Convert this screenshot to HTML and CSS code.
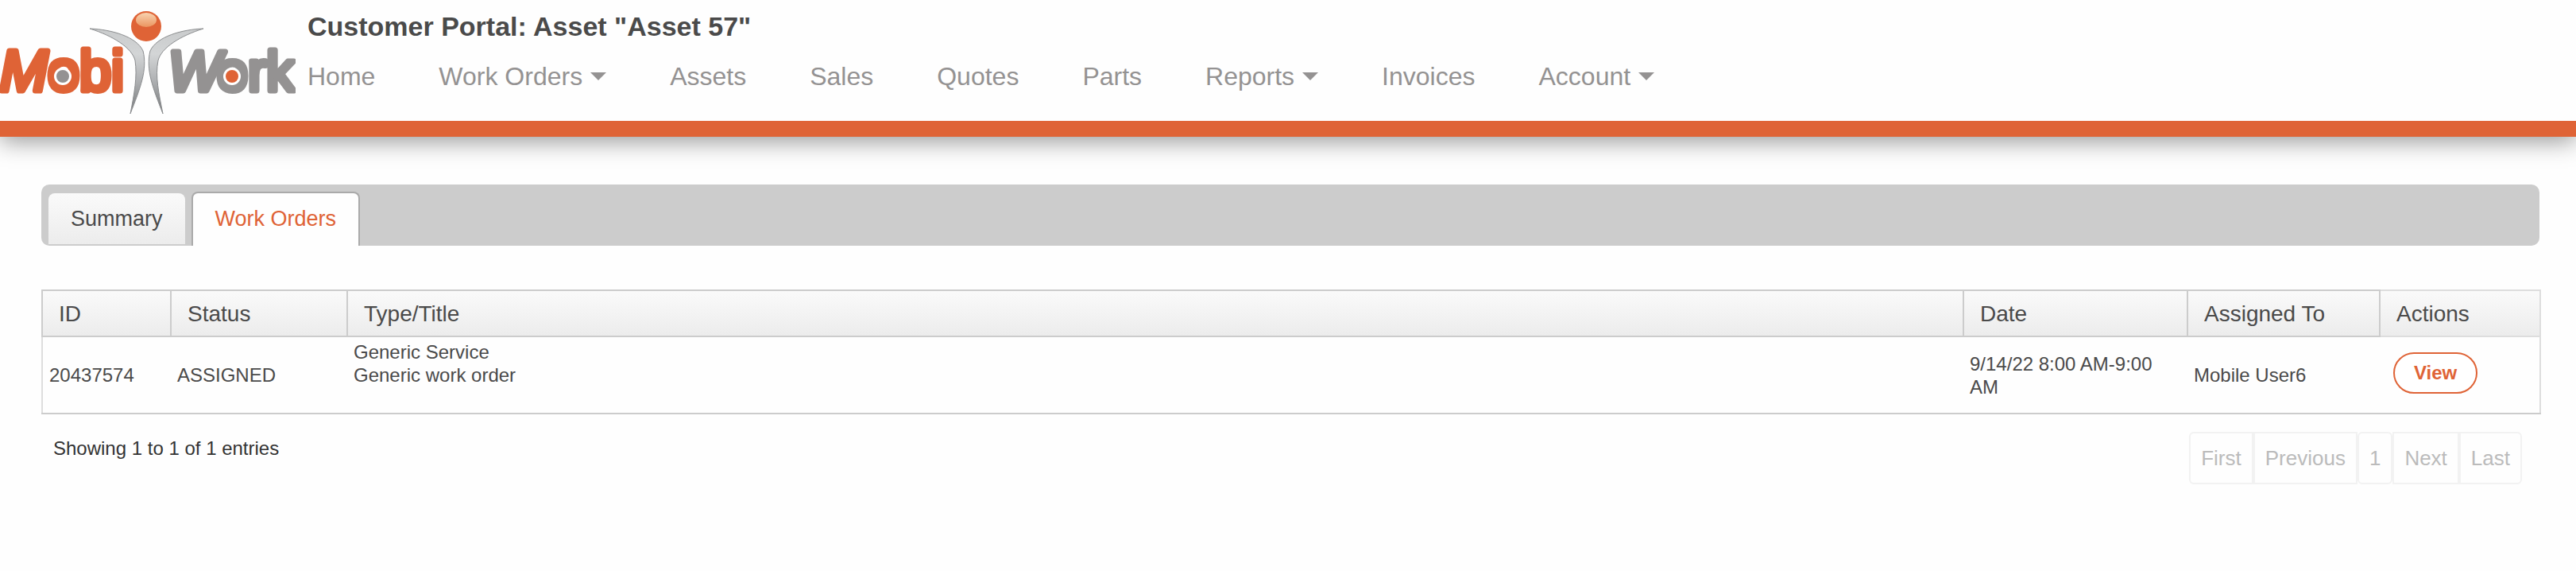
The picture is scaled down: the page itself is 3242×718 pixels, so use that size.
FILE: index.html
```html
<!DOCTYPE html>
<html lang="en">
<head>
    <meta charset="UTF-8">
    <meta name="viewport" content="width=device-width, initial-scale=1.0">
    <title>Customer Portal</title>
    <link rel="stylesheet" href="styles.css">
</head>
<body>
    <header class="header">
        <a href="#" class="logo" aria-label="MobiWork">
            <svg width="372" height="152" viewBox="0 0 372 152">
                <defs>
                    <linearGradient id="silver" x1="0" y1="0" x2="0" y2="1">
                        <stop offset="0" stop-color="#c9cbcc"/>
                        <stop offset="0.3" stop-color="#d3d5d6"/>
                        <stop offset="0.6" stop-color="#b0b2b4"/>
                        <stop offset="1" stop-color="#77797b"/>
                    </linearGradient>
                    <linearGradient id="shine" x1="0" y1="0" x2="0" y2="1">
                        <stop offset="0" stop-color="#f8d3b0"/>
                        <stop offset="1" stop-color="#eb9560"/>
                    </linearGradient>
                </defs>
                <text x="0" y="114" class="logo-mobi"><tspan class="slanted">M</tspan>obi</text>
                <text x="212" y="114" class="logo-work"><tspan class="slanted">W</tspan><tspan dx="-5">ork</tspan></text>
                <circle cx="79" cy="96" r="11" fill="#fff"/>
                <circle cx="79" cy="96" r="8" fill="#949292"/>
                <circle cx="292" cy="96" r="11" fill="#fff"/>
                <circle cx="292" cy="96" r="8" fill="#df6336"/>
                <path d="M113 36C140 37 172 46 180 64C186 88 176 112 164 143C169 118 173 96 170 76C166 60 142 45 113 36Z" fill="url(#silver)" stroke="#8b8d8f"/>
                <path d="M256 36C229 37 197 46 189 64C183 88 193 112 205 143C200 118 195 96 199 76C203 60 227 45 256 36Z" fill="url(#silver)" stroke="#8b8d8f"/>
                <circle cx="184" cy="33" r="19" fill="#df6336"/>
                <ellipse cx="184" cy="25" rx="13" ry="9" fill="url(#shine)"/>
            </svg>
        </a>
        <div class="header-content">
            <h1>Customer Portal: Asset "Asset 57"</h1>
            <nav class="menu">
                <a href="#">Home</a>
                <a href="#" class="dropdown">Work Orders</a>
                <a href="#">Assets</a>
                <a href="#">Sales</a>
                <a href="#">Quotes</a>
                <a href="#">Parts</a>
                <a href="#" class="dropdown">Reports</a>
                <a href="#">Invoices</a>
                <a href="#" class="dropdown">Account</a>
            </nav>
        </div>
    </header>

    <main class="container">
        <div class="tabs">
            <a href="#" class="tab">Summary</a>
            <a href="#" class="tab active">Work Orders</a>
        </div>

        <table class="work-orders">
            <colgroup>
                <col class="col-id">
                <col class="col-status">
                <col>
                <col class="col-date">
                <col class="col-assigned">
                <col class="col-actions">
            </colgroup>
            <thead>
                <tr>
                    <th>ID</th>
                    <th>Status</th>
                    <th>Type/Title</th>
                    <th>Date</th>
                    <th>Assigned To</th>
                    <th class="no-sort">Actions</th>
                </tr>
            </thead>
            <tbody>
                <tr>
                    <td>20437574</td>
                    <td>ASSIGNED</td>
                    <td>Generic Service<br>Generic work order<br>&nbsp;</td>
                    <td>9/14/22 8:00 AM-9:00 AM</td>
                    <td>Mobile User6</td>
                    <td class="actions"><button type="button" class="btn-view">View</button></td>
                </tr>
            </tbody>
        </table>

        <div class="table-footer">
            <p>Showing 1 to 1 of 1 entries</p>
            <div class="pagination">
                <button type="button" disabled>First</button>
                <button type="button" disabled>Previous</button>
                <button type="button" disabled class="page">1</button>
                <button type="button" disabled>Next</button>
                <button type="button" disabled>Last</button>
            </div>
        </div>
    </main>
</body>
</html>
```
FILE: styles.css
```css
* {
    box-sizing: border-box;
}

body {
    font-family: "Helvetica Neue", Helvetica, "Liberation Sans", Arial, sans-serif;
    font-size: 24px;
    line-height: 29px;
    color: #4a4a4a;
    background-color: #fefefe;
    margin: 0;
}

a {
    text-decoration: none;
}

/* header */
.header {
    display: flex;
    gap: 15px;
    border-bottom: 20px solid #df6336;
    box-shadow: 0 6px 28px rgba(0, 0, 0, 0.4);
}

.logo svg {
    display: block;
}

.logo text {
    stroke-width: 7px;
    stroke-linejoin: round;
}

.logo .slanted {
    font-style: italic;
}

.logo-mobi {
    font-size: 72px;
    fill: #df6336;
    stroke: #df6336;
}

.logo-work {
    font-size: 70px;
    fill: #949292;
    stroke: #949292;
}

h1 {
    margin: 12px 0 22px;
    font-size: 34px;
    line-height: 42px;
}

.menu {
    display: flex;
    gap: 80px;
}

.menu a {
    display: flex;
    align-items: center;
    gap: 10px;
    font-size: 32px;
    line-height: 40px;
    color: #949292;
}

.dropdown::after {
    content: "";
    border: 10px solid transparent;
    border-top-color: #949292;
    border-bottom: 0;
}

/* tabs */
.container {
    padding: 60px 44px 0 52px;
}

.tabs {
    display: flex;
    align-items: flex-end;
    gap: 8px;
    height: 77px;
    padding: 0 9px;
    margin-right: 2px;
    background-color: #ccc;
    border-radius: 10px;
}

.tab {
    height: 64px;
    margin-bottom: 2px;
    padding: 0 28px;
    font-size: 27px;
    line-height: 64px;
    color: #4a4a4a;
    background: linear-gradient(#fafafa, #ececec);
    border-radius: 8px 8px 0 0;
}

.tab.active {
    height: 68px;
    margin-bottom: 0;
    color: #df6336;
    background: #fefefe;
    border: 2px solid #aaa;
    border-bottom: 0;
}

/* table */
.work-orders {
    width: 100%;
    margin-top: 55px;
    border-collapse: collapse;
    table-layout: fixed;
    border: 2px solid #ddd;
    border-bottom-color: #ccc;
}

.col-id {
    width: 162px;
}

.col-status {
    width: 222px;
}

.col-date {
    width: 282px;
}

.col-assigned {
    width: 242px;
}

.col-actions {
    width: 202px;
}

th {
    height: 58px;
    padding: 0 20px;
    font-size: 28px;
    font-weight: 500;
    text-align: left;
    background: linear-gradient(#fafafa, #ececec);
    border: 2px solid #ccc;
}

th.no-sort {
    border-color: #ddd;
}

td {
    padding: 4px 8px;
}

.actions {
    padding: 0 17px 6px;
}

.btn-view {
    display: block;
    height: 52px;
    padding: 0 24px;
    font-family: inherit;
    font-size: 24px;
    font-weight: bold;
    color: #df6336;
    background: #fff;
    border: 2px solid #df6336;
    border-radius: 26px;
    cursor: pointer;
}

.table-footer {
    display: flex;
    justify-content: space-between;
    padding: 22px 24px 0 15px;
}

.table-footer p {
    margin: 6px 0 0;
    color: #333;
}

.pagination {
    display: flex;
}

.pagination button {
    height: 66px;
    padding: 0 13px;
    font-family: inherit;
    font-size: 26px;
    color: #bbb;
    background: none;
    border: 2px solid #f2f2f2;
}

.pagination button:first-child {
    border-radius: 6px 0 0 6px;
}

.pagination button:last-child {
    border-radius: 0 6px 6px 0;
}

.pagination .page {
    border-radius: 6px;
}
```
